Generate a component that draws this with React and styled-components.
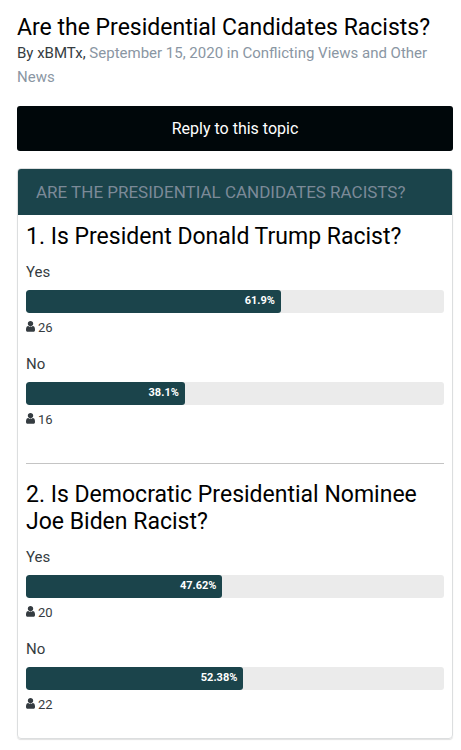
import React from "react";
import styled, { createGlobalStyle } from "styled-components";

const GlobalStyle = createGlobalStyle`
  * {
    box-sizing: border-box;
  }

  body {
    margin: 0;
    background: #fff;
    color: #353c41;
    font-family: Roboto, "Liberation Sans", sans-serif;
    font-size: 14px;
  }
`;

const Page = styled.main`
  padding: 14px 8px 8px 17px;
`;

const Title = styled.h1`
  margin: 0;
  color: #000;
  font-size: 23px;
  font-weight: 400;
  line-height: 27px;
`;

const Byline = styled.p`
  margin: 0;
  color: #8a96a3;
  font-size: 15px;
  line-height: 24px;
`;

const MetaLink = styled.a`
  color: ${(props) => (props.$author ? "#353c41" : "inherit")};
  text-decoration: none;
`;

const ReplyButton = styled.button`
  display: block;
  width: 100%;
  height: 45px;
  margin: 17px 0;
  padding: 0;
  border: none;
  border-radius: 3px;
  background: #00070a;
  color: #fff;
  font-family: inherit;
  font-size: 16px;
  cursor: pointer;
`;

const Poll = styled.section`
  border: 1px solid #dcdedf;
  border-radius: 4px;
  box-shadow: 0 1px 1px rgba(0, 0, 0, 0.12);
  overflow: hidden;
`;

const PollTitle = styled.h2`
  margin: 0;
  padding: 0 18px;
  background: #1b444b;
  color: #7c8a98;
  font-size: 17px;
  font-weight: 400;
  line-height: 46px;
  text-transform: uppercase;
`;

const Question = styled.div`
  margin: 0 8px;
  padding: 8px 0 16px;

  & + & {
    padding: 17px 0 6px;
    border-top: 1px solid #c4c4c4;
  }
`;

const QuestionTitle = styled.h3`
  margin: 0 0 13px;
  color: #000;
  font-size: 23px;
  font-weight: 400;
  line-height: 27px;
`;

const Choice = styled.div`
  margin-bottom: 19px;
`;

const Label = styled.div`
  margin-bottom: 9px;
  font-size: 15px;
  line-height: 18px;
`;

const Track = styled.div`
  height: 23px;
  border-radius: 3px;
  background: #ebebeb;
  overflow: hidden;
`;

const Fill = styled.div`
  height: 100%;
  padding-right: 6px;
  border-radius: 3px;
  background: #1b444b;
  color: #fff;
  font-size: 11px;
  font-weight: 700;
  line-height: 21px;
  text-align: right;
`;

const Votes = styled.div`
  display: flex;
  align-items: center;
  gap: 3px;
  height: 18px;
  margin-top: 5px;
  font-size: 13px;
`;

const UserIcon = () => (
  <svg width="9" height="12" viewBox="0 128 1280 1707" fill="currentColor" aria-hidden="true">
    <path d="M1280 1399q0 109-62.5 187t-150.5 78h-854q-88 0-150.5-78t-62.5-187q0-85 8.5-160.5t31.5-152 58.5-131 94-89 134.5-34.5q131 128 313 128t313-128q76 0 134.5 34.5t94 89 58.5 131 31.5 152 8.5 160.5zm-256-887q0 159-112.5 271.5t-271.5 112.5-271.5-112.5-112.5-271.5 112.5-271.5 271.5-112.5 271.5 112.5 112.5 271.5z" />
  </svg>
);

const questions = [
  {
    title: "Is President Donald Trump Racist?",
    choices: [
      { label: "Yes", percent: 61.9, votes: 26 },
      { label: "No", percent: 38.1, votes: 16 },
    ],
  },
  {
    title: "Is Democratic Presidential Nominee Joe Biden Racist?",
    choices: [
      { label: "Yes", percent: 47.62, votes: 20 },
      { label: "No", percent: 52.38, votes: 22 },
    ],
  },
];

const App = () => {
  return (
    <Page>
      <GlobalStyle />
      <Title>Are the Presidential Candidates Racists?</Title>
      <Byline>
        <MetaLink $author href="#author">
          By xBMTx,
        </MetaLink>{" "}
        September 15, 2020 in{" "}
        <MetaLink href="#forum">Conflicting Views and Other News</MetaLink>
      </Byline>
      <ReplyButton type="button">Reply to this topic</ReplyButton>
      <Poll>
        <PollTitle>Are the Presidential Candidates Racists?</PollTitle>
        {questions.map((question, index) => (
          <Question key={question.title}>
            <QuestionTitle>{`${index + 1}. ${question.title}`}</QuestionTitle>
            {question.choices.map((choice) => (
              <Choice key={choice.label}>
                <Label>{choice.label}</Label>
                <Track>
                  {/* bars are drawn to the whole percent */}
                  <Fill style={{ width: `${Math.floor(choice.percent)}%` }}>
                    {`${choice.percent}%`}
                  </Fill>
                </Track>
                <Votes>
                  <UserIcon />
                  {choice.votes}
                </Votes>
              </Choice>
            ))}
          </Question>
        ))}
      </Poll>
    </Page>
  );
};

export default App;
